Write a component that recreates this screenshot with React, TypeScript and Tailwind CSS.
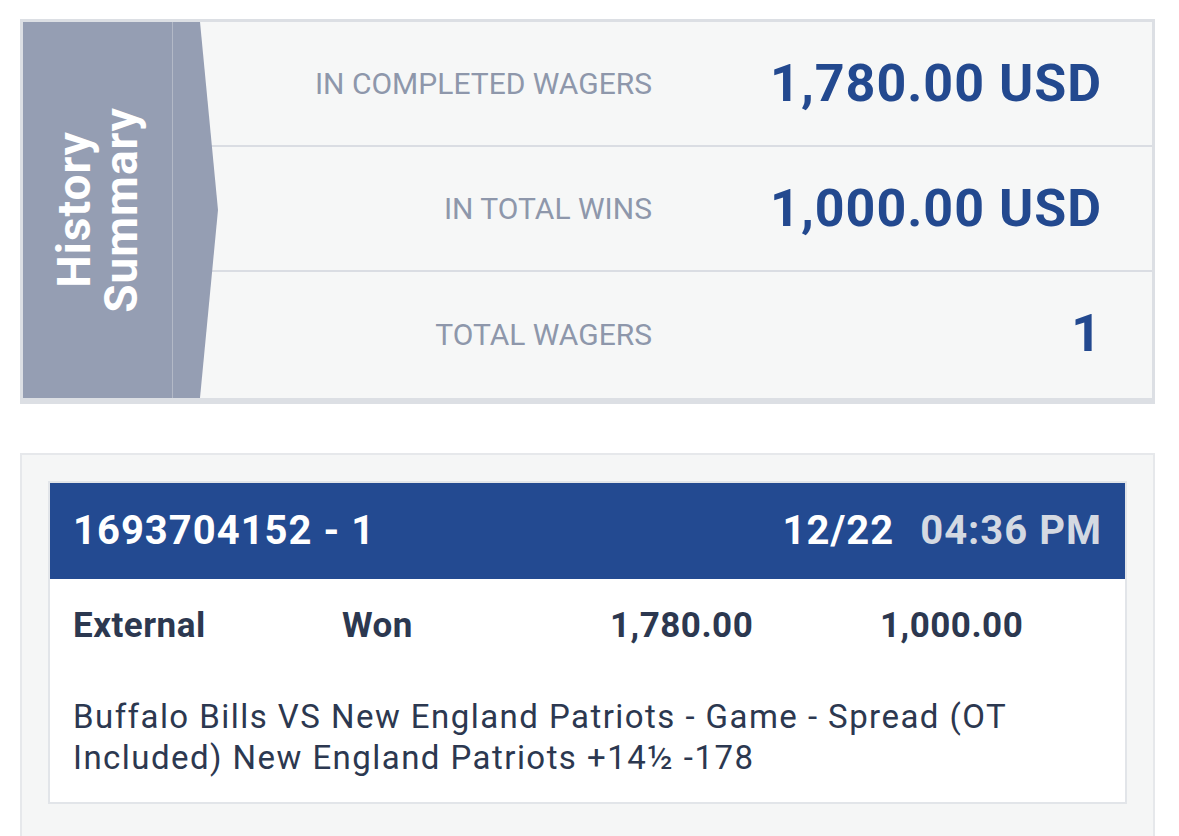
import React from "react";

const rows = [
  { label: "IN COMPLETED WAGERS", value: "1,780.00 USD" },
  { label: "IN TOTAL WINS", value: "1,000.00 USD" },
  { label: "TOTAL WAGERS", value: "1" },
];

export default function App() {
  return (
    <div className="min-h-[836px] w-[1179px] bg-white pt-[19px] pl-[20px] font-['Roboto',sans-serif]">
      {/* Summary box */}
      <div className="flex w-[1135px] border-x-[3px] border-t-[3px] border-b-[6px] border-[#dcdfe4] bg-[#f6f7f7]">
        <div className="relative z-10 flex h-[376px] w-[195px] shrink-0 bg-[#959eb3] [clip-path:polygon(0_0,177px_0,100%_50%,177px_100%,0_100%)]">
          <div className="flex h-full w-[150px] items-center justify-center border-r border-[#b3b9c7]">
            <div className="rotate-180 text-center text-[46px] leading-[47px] font-bold text-white [writing-mode:vertical-rl] tracking-[1px]">
              History
              <br />
              Summary
            </div>
          </div>
        </div>
        <div className="-ml-[18px] flex flex-1 flex-col">
          {rows.map((r, i) => (
            <div
              key={r.label}
              className={`flex items-center ${i < 2 ? "h-[125px] border-b-2 border-[#dadde3]" : "h-[124px]"}`}
            >
              <div className="w-[452px] text-right text-[30px] text-[#8e97ab]">{r.label}</div>
              <div className="flex-1 pr-[50px] text-right text-[52px] font-bold text-[#23498f] tracking-[1px]">
                {r.value}
              </div>
            </div>
          ))}
        </div>
      </div>

      {/* Wager box */}
      <div className="mt-[49px] h-[400px] w-[1135px] border-2 border-[#e6e8eb] bg-[#f5f6f6] pt-[26px] pl-[26px]">
        <div className="w-[1079px] border-2 border-[#e2e5e9] bg-white">
          <div className="flex h-[96px] items-center justify-between bg-[#234a91] px-[23px] text-[40px] font-bold text-white tracking-[1px]">
            <span>1693704152 - 1</span>
            <span>
              12/22<span className="ml-[26px] text-[#d4d9e2]">04:36 PM</span>
            </span>
          </div>
          <div className="pl-[23px] pr-[60px] pt-[27px] pb-[24px] text-[#2c3850]">
            <div className="grid grid-cols-[269px_268px_270px_1fr] text-[35px] leading-[40px] font-bold tracking-[0.5px]">
              <span>External</span>
              <span>Won</span>
              <span>1,780.00</span>
              <span>1,000.00</span>
            </div>
            <div className="mt-[50px] text-[33px] leading-[41px] tracking-[1.45px]">
              Buffalo Bills VS New England Patriots - Game - Spread (OT Included) New England Patriots +14½ -178
            </div>
          </div>
        </div>
      </div>
    </div>
  );
}
